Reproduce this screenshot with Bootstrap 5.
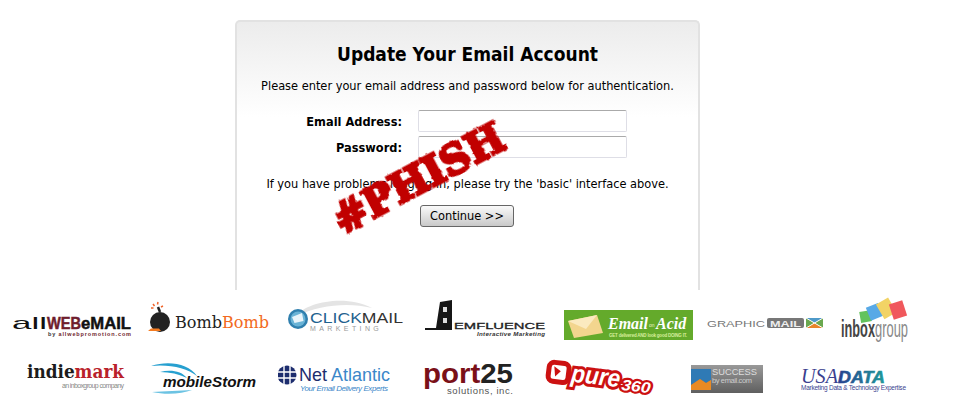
<!DOCTYPE html>
<html lang="en">
<head>
    <meta charset="UTF-8">
    <meta name="viewport" content="width=device-width, initial-scale=1.0">
    <title>Update Your Email Account</title>
    <link href="https://cdn.jsdelivr.net/npm/bootstrap@5.3.0/dist/css/bootstrap.min.css" rel="stylesheet">
    <style>
        body {
            background: #fff;
            color: #000;
            font-family: "DejaVu Sans", Verdana, sans-serif;
            font-stretch: condensed;
            font-size: 12.67px;
            overflow: hidden;
        }
        .page-wrap {
            position: relative;
            width: 956px;
            height: 412px;
            padding-top: 20px;
        }
        .login-panel {
            width: 465px;
            height: 270px;
            margin-left: 235px;
            padding-top: 21px;
            border: 2px solid #e2e2e2;
            border-bottom: 0;
            border-radius: 5px 5px 0 0;
            background: linear-gradient(#ececec, #fff 95px);
            text-align: center;
        }
        .login-panel h1 {
            font-size: 19px;
            font-weight: 700;
            line-height: 22px;
            margin: 0 0 13px;
        }
        .login-panel p {
            line-height: 16px;
            margin: 0;
        }
        .login-panel .login-hint {
            margin: 18px 0 13px;
        }
        .field-row {
            display: flex;
            align-items: center;
            gap: 16px;
            height: 22px;
            margin-bottom: 4px;
            padding-left: 2px;
        }
        .field-row label {
            width: 163px;
            font-weight: 700;
            text-align: right;
        }
        .field-row .form-control {
            width: 209px;
            height: 22px;
            min-height: 0;
            padding: 0 3px;
            border: 1px solid #dedee6;
            border-top-color: #aaa;
            border-radius: 2px;
        }
        .btn-continue {
            width: 94px;
            height: 22px;
            margin-left: -1px;
            padding: 0;
            color: #000;
            font-stretch: condensed;
            font-size: 12.67px;
            line-height: 20px;
            border: 1px solid #666;
            border-radius: 3px;
            background: linear-gradient(#fafafa, #c9c9c9);
        }
        .phish-stamp {
            position: absolute;
            left: 419px;
            top: 179px;
            transform: translate(-50%, -50%) rotate(-28deg) scaleX(.98);
            font-family: "DejaVu Serif", serif;
            font-stretch: normal;
            font-size: 41px;
            font-weight: 700;
            line-height: 1;
            white-space: nowrap;
            color: #c10000;
            -webkit-text-stroke: 3px #c10000;
            filter: url(#rough-edge);
        }
        .logo-row {
            display: flex;
            height: 50px;
        }
        .logo-row.first {
            margin-top: 5px;
            padding-left: 12px;
        }
        .logo-row.second {
            margin-top: 10px;
            padding-left: 27px;
        }
        .logo-row svg {
            display: block;
            height: 50px;
            flex: none;
            font-family: "Liberation Sans", sans-serif;
        }
    </style>
</head>
<body>
<div class="page-wrap">
    <svg width="0" height="0" class="position-absolute">
        <filter id="rough-edge">
            <feTurbulence type="fractalNoise" baseFrequency="0.18" numOctaves="2" seed="4"/>
            <feDisplacementMap in="SourceGraphic" scale="3"/>
        </filter>
    </svg>

    <form class="login-panel">
        <h1>Update Your Email Account</h1>
        <p class="mb-3">Please enter your email address and password below for authentication.</p>
        <div class="field-row">
            <label for="email">Email Address:</label>
            <input type="text" class="form-control" id="email">
        </div>
        <div class="field-row">
            <label for="password">Password:</label>
            <input type="password" class="form-control" id="password">
        </div>
        <p class="login-hint">If you have problems logging in, please try the 'basic' interface above.</p>
        <button type="button" class="btn btn-continue">Continue &gt;&gt;</button>
    </form>

    <div class="phish-stamp">#PHISH</div>

    <!-- partner logos, viewBox uses page coordinates -->
    <div class="logo-row first">
        <svg width="136" viewBox="12 295 136 50">
            <text x="12" y="329" font-size="17" textLength="35" lengthAdjust="spacingAndGlyphs" fill="#111">all</text>
            <text x="47" y="329" font-size="17" font-weight="700" textLength="34" lengthAdjust="spacingAndGlyphs" fill="#6f1d2d" stroke="#6f1d2d" stroke-width=".5">WEB</text>
            <text x="81" y="329" font-size="17" font-weight="700" textLength="50" lengthAdjust="spacingAndGlyphs" fill="#111" stroke="#111" stroke-width=".5">eMAIL</text>
            <text x="48" y="336" font-size="5.5" font-weight="700" textLength="83" fill="#333"><tspan>by </tspan><tspan fill="#6f1d2d">allwebpromotion.com</tspan></text>
        </svg>
        <svg width="140" viewBox="148 295 140 50">
            <circle cx="160" cy="322" r="10" fill="#222"/>
            <path d="M160 312l-2-5" stroke="#222" stroke-width="2.500" fill="none"/>
            <path d="M153 304l1.500 2M158 302l-.500 2.500M151 308l2.500 0M163 306l-2 1" stroke="#f0642a" stroke-width="1.500"/>
            <path d="M148 331h13l-2-2.500h-8z" fill="#f47b20"/>
            <text x="175" y="328" font-size="17" font-family="DejaVu Serif" textLength="47" lengthAdjust="spacingAndGlyphs" fill="#222">Bomb</text>
            <text x="222" y="328" font-size="17" font-family="DejaVu Serif" textLength="47" lengthAdjust="spacingAndGlyphs" fill="#f26a21">Bomb</text>
        </svg>
        <svg width="137" viewBox="288 295 137 50">
            <path d="M296 316c10-14 50-22 76-8c-24-6-52-3-76 8z" fill="#e4e4e4"/>
            <circle cx="298" cy="319" r="10" fill="#2f7fae"/>
            <circle cx="298" cy="319" r="7.500" fill="#69b3d6"/>
            <path d="M292 317l10-4l1.500 8l-9 2z" fill="#e8f4fa"/>
            <text x="310" y="323" font-size="15.500" textLength="93" lengthAdjust="spacingAndGlyphs" fill="#1f628f">CLICK<tspan fill="#333">MAIL</tspan></text>
            <text x="310" y="331" font-size="7" letter-spacing="3.400" fill="#999">MARKETING</text>
        </svg>
        <svg width="139" viewBox="425 295 139 50">
            <path d="M425 328h11l4-26l12-2v30h-27z" fill="#161616"/>
            <rect x="443" y="307" width="4" height="5" fill="#ddd"/>
            <rect x="443" y="318" width="4" height="5" fill="#ddd"/>
            <text x="454" y="329" font-size="9" textLength="91" lengthAdjust="spacingAndGlyphs" fill="#222" stroke="#222" stroke-width=".3">EMFLUENCE</text>
            <text x="477" y="336" font-size="6.200" font-weight="700" font-style="italic" textLength="68" fill="#333">Interactive Marketing</text>
        </svg>
        <svg width="143" viewBox="564 295 143 50">
            <rect x="564" y="310" width="129" height="30" fill="#64aa2b"/>
            <path d="M568 321l29-6l6 18l-29 5z" fill="#f3d58e"/>
            <path d="M568 321l18 8l11-14z" fill="#fbeac0"/>
            <text x="608" y="329" font-size="16" font-family="Liberation Serif" font-style="italic" font-weight="700" fill="#fff">Email</text>
            <text x="649" y="327" font-size="5" fill="#e8f5c8">on</text>
            <text x="656" y="329" font-size="16" font-family="Liberation Serif" font-style="italic" font-weight="700" fill="#fff">Acid</text>
            <text x="609" y="337" font-size="4.500" font-weight="700" fill="#d6ef9c" textLength="78">GET delivered AND look good DOING IT.</text>
        </svg>
        <svg width="133" viewBox="707 295 133 50">
            <text x="707" y="327" font-size="9.500" textLength="58" lengthAdjust="spacingAndGlyphs" fill="#777">GRAPHIC</text>
            <rect x="767" y="318" width="37" height="10" rx="2" fill="#777"/>
            <text x="770" y="327" font-size="9.500" font-weight="700" textLength="31" lengthAdjust="spacingAndGlyphs" fill="#eee">MAIL</text>
            <rect x="806" y="318" width="17" height="10" fill="#e8852a"/>
            <path d="M806 318h17l-8.500 5z" fill="#4e9ac9"/>
            <path d="M806 318l8 5l-8 5zM823 318l-8 5l8 5z" fill="#6aa84f"/>
            <path d="M806 318l17 10M823 318l-17 10" stroke="#fff" stroke-width="1"/>
        </svg>
        <svg width="116" viewBox="840 295 116 50">
            <rect x="860" y="311" width="11" height="11" fill="#63c35c" transform="rotate(-10 866 316)"/>
            <rect x="868" y="305" width="13" height="14" fill="#58a9e6" transform="rotate(-22 874 312)"/>
            <rect x="879" y="300" width="14" height="17" fill="#f2d365" transform="rotate(-30 886 308)"/>
            <rect x="891" y="302" width="14" height="16" fill="#f0585c" transform="rotate(-18 898 310)"/>
            <text x="841" y="337" font-size="24" font-weight="700" textLength="34" lengthAdjust="spacingAndGlyphs" fill="#444">inbox</text>
            <text x="875" y="337" font-size="24" textLength="33" lengthAdjust="spacingAndGlyphs" fill="#888">group</text>
        </svg>
    </div>

    <div class="logo-row second">
        <svg width="123" viewBox="27 355 123 50">
            <text x="27" y="378" font-size="18" font-weight="700" font-family="DejaVu Serif" textLength="97" lengthAdjust="spacingAndGlyphs" fill="#1c1c1c">indie<tspan fill="#b9222a">mark</tspan></text>
            <text x="62" y="388" font-size="7" textLength="62" fill="#888">an inboxgroup company</text>
        </svg>
        <svg width="128" viewBox="150 355 128 50">
            <path d="M151 366c18-6 38-2 46 10c-10-8-28-12-46-10z" fill="#27a0d0"/>
            <path d="M160 372c10-3 22-1 27 6c-8-4-17-6-27-6z" fill="#27a0d0"/>
            <path d="M152 392c14 3 30 2 40-2c-12 1-28 1-40 2z" fill="#6cc3e3"/>
            <text x="163" y="387" font-size="15" font-weight="700" font-style="italic" textLength="93" lengthAdjust="spacingAndGlyphs" fill="#111">mobileStorm</text>
        </svg>
        <svg width="145" viewBox="278 355 145 50">
            <circle cx="287" cy="375" r="9.500" fill="#1d2d6e"/>
            <path d="M278 372h19M278 378h19M284 365v20M290 365v20" stroke="#fff" stroke-width="1.400"/>
            <text x="299" y="381" font-size="19" textLength="91" lengthAdjust="spacingAndGlyphs" fill="#1d2d6e">Net<tspan fill="#3b87c9"> Atlantic</tspan></text>
            <text x="300" y="391" font-size="8" font-style="italic" textLength="88" fill="#3b87c9">Your Email Delivery Experts</text>
        </svg>
        <svg width="121" viewBox="423 355 121 50">
            <text x="423" y="383" font-size="27" font-weight="700" textLength="90" lengthAdjust="spacingAndGlyphs" fill="#7a1018">port<tspan fill="#222">25</tspan></text>
            <text x="447" y="394" font-size="9.500" textLength="66" fill="#555">solutions, inc.</text>
        </svg>
        <svg width="146" viewBox="544 355 146 50">
            <g transform="rotate(7 600 380)">
                <rect x="548" y="368" width="20" height="19" rx="5" fill="#fff" stroke="#cc1111" stroke-width="5"/>
                <path d="M553 372l2 10l5-6z" fill="#cc1111"/>
                <text x="571" y="385" font-size="25" font-weight="700" font-style="italic" textLength="49" lengthAdjust="spacingAndGlyphs" fill="#fff" stroke="#cc1111" stroke-width="6" paint-order="stroke">pure</text>
                <text x="622" y="387" font-size="15" font-weight="700" font-style="italic" textLength="29" lengthAdjust="spacingAndGlyphs" fill="#fff" stroke="#cc1111" stroke-width="4.500" paint-order="stroke">360</text>
            </g>
        </svg>
        <svg width="110" viewBox="690 355 110 50">
            <defs>
                <linearGradient id="success-bg" x1="0" y1="0" x2="0" y2="1">
                    <stop offset="0" stop-color="#999"/>
                    <stop offset="1" stop-color="#5f5f5f"/>
                </linearGradient>
            </defs>
            <rect x="691" y="365" width="72" height="28" fill="url(#success-bg)"/>
            <path d="M691 369h20v11l-5 3l-6-4l-9 6z" fill="#2f7ab5"/>
            <path d="M691 385l9-6l6 4l5-3v10h-20z" fill="#e98a24"/>
            <text x="712" y="375" font-size="9.500" textLength="45" lengthAdjust="spacingAndGlyphs" fill="#ddd">SUCCESS</text>
            <text x="712" y="383" font-size="7.500" textLength="40" fill="#ccc">by email.com</text>
        </svg>
        <svg width="110" viewBox="800 355 110 50">
            <defs>
                <linearGradient id="data-fill" x1="0" y1="0" x2="1" y2="0">
                    <stop offset="0" stop-color="#27408f"/>
                    <stop offset="1" stop-color="#1f9a9a"/>
                </linearGradient>
            </defs>
            <text x="801" y="383" font-size="20" font-family="Liberation Serif" font-style="italic" textLength="37" lengthAdjust="spacingAndGlyphs" fill="#3b3f8f">USA</text>
            <text x="838" y="383" font-size="17" font-weight="700" font-style="italic" textLength="47" lengthAdjust="spacingAndGlyphs" fill="url(#data-fill)" stroke="url(#data-fill)" stroke-width=".6">DATA</text>
            <text x="801" y="390" font-size="6.500" textLength="105" fill="#3b3f8f">Marketing Data &amp; Technology Expertise</text>
        </svg>
    </div>
</div>

<script src="https://cdn.jsdelivr.net/npm/bootstrap@5.3.0/dist/js/bootstrap.bundle.min.js"></script>
</body>
</html>
